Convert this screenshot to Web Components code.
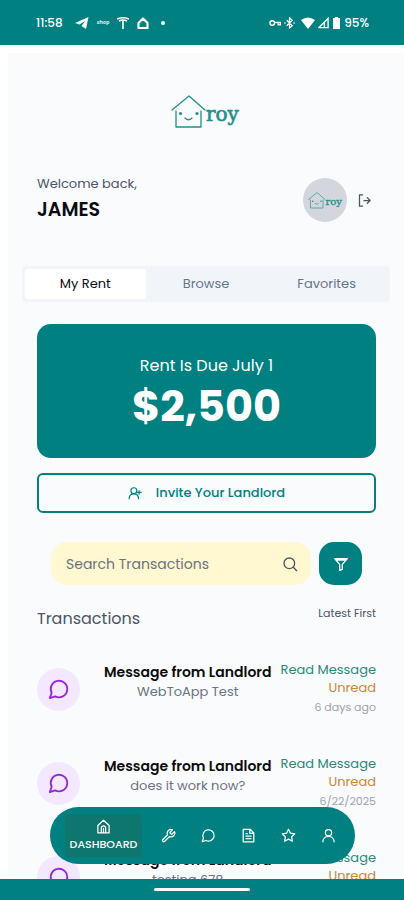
<!DOCTYPE html>
<html lang="en">
<head>
<meta charset="utf-8">
<meta name="viewport" content="width=device-width, initial-scale=1">
<title>Roy</title>
<style>
html, body { margin: 0; height: 100%; }
body { font-family: Poppins, Inter, "Liberation Sans", sans-serif; background: #fff; color: #4b5563; --teal: #008080; --page: #f9fbfd; }
</style>
</head>
<body>
<roy-app></roy-app>
<script>
const define = (name, html, setup) => customElements.define(name, class extends HTMLElement {
  constructor() {
    super();
    this.attachShadow({ mode: 'open' });
  }
  connectedCallback() {
    if (this.shadowRoot.childNodes.length) return;
    const t = document.createElement('template');
    t.innerHTML = '<style>*{box-sizing:border-box}button{font:inherit;color:inherit;background:none;border:0;padding:0;margin:0;cursor:pointer}:host{display:block}</style>' + html;
    this.shadowRoot.append(t.content.cloneNode(true));
    if (setup) setup(this, this.shadowRoot);
  }
});

const icons = {
  logout: '<path d="M9 3H4v18h5M11 12h10M16.500 7.500 21 12l-4.500 4.500"/>',
  invite: '<circle cx="10" cy="8" r="5"/><path d="M2 22c0-5 3-8.500 8-8.500s8 3.500 8 8.500M19 8v6M16.500 11h6"/>',
  search: '<circle cx="11" cy="11" r="8"/><path d="m17 17 5 5"/>',
  filter: '<path d="M2.500 4h19L14 12.500V20l-4 1.500v-9zM5 6h14"/>',
  chat: '<path d="M7.900 20A9 9 0 1 0 4 16.100L2 22Z"/>',
  home: '<path d="M3 10.500 12 2l9 8.500V22H3zM8.500 22v-7.500a3.500 3.500 0 0 1 7 0V22M12 15v7"/>',
  wrench: '<path d="M14.700 6.300a1 1 0 0 0 0 1.600l1.600 1.600a1 1 0 0 0 1.600 0l3.700-3.700a6 6 0 0 1-7.900 7.900L6 21.300a2.100 2.100 0 0 1-3-3l7.500-7.600a6 6 0 0 1 7.900-7.900z"/>',
  file: '<path d="M14.500 2H3.500v20h17V8zM14 2v6.500h6M8 9h2M8 13h8M8 17h8"/>',
  star: '<path d="m12 2 3.100 6.300 6.900 1-5 4.900 1.200 6.900L12 17.800l-6.200 3.300L7 14.200 2 9.300l6.900-1z"/>',
  user: '<circle cx="12" cy="7.500" r="5"/><path d="M3 22c0-5 4-8.500 9-8.500s9 3.500 9 8.500"/>'
};
define('roy-icon', '<style>:host{width:16px;height:16px;flex:none}svg{display:block;width:100%;height:100%;fill:none;stroke:currentColor;stroke-width:2;stroke-linecap:round;stroke-linejoin:round}</style><svg viewBox="0 0 24 24" aria-hidden="true"></svg>',
  (el, root) => { root.querySelector('svg').innerHTML = icons[el.getAttribute('name')]; });

define('roy-logo', `<style>:host{width:70px;color:#248f88}svg{display:block;width:100%}</style>
<svg viewBox="0 0 70 36" role="img" aria-label="roy">
 <g fill="none" stroke="currentColor" stroke-width="1.300" stroke-linecap="round" stroke-linejoin="round">
 <path d="M1 17 18 3 34 17M5 18V34H30V18M14 25q3.500 3.500 7 0"/></g>
 <g fill="currentColor"><circle cx="9.500" cy="20.500" r="1.600"/><circle cx="26" cy="20.500" r="1.600"/></g>
 <text x="35" y="28" fill="currentColor" stroke="currentColor" stroke-width=".6" font-family="'DejaVu Serif', serif" font-size="20">roy</text>
</svg>`);

define('status-bar', `<style>
:host{background:var(--teal);color:#fff;height:45px;flex:none;font-size:12px;line-height:16px;font-weight:500}
div{display:flex;justify-content:space-between;padding:15px 35px 0 36px}
span{display:flex;align-items:center}svg{display:block}
.l{gap:8px}.r{gap:3px}.tiny{font-size:5px;opacity:.8}.dot{width:4px;height:4px;border-radius:50%;background:#fff}
time{margin-right:4px}.dot{margin-left:4px}.gap{margin-left:3px}
</style><div><span class="l"><time>11:58</time>
<svg width="14" height="12" viewBox="0 0 14 12" fill="#fff"><path d="M0 6 13.500 0 11 12 6.500 9 10 4 4.500 7.500z"/></svg>
<b class="tiny">shop</b>
<svg width="12" height="12" viewBox="0 0 12 12" fill="none" stroke="#fff" stroke-width="1.600"><path d="M0 2q6-2.500 12 0M2 4q2-1 4-1t4 1M6 3v9"/></svg>
<svg width="12" height="12" viewBox="0 0 12 12" fill="none" stroke="#fff" stroke-width="2.200" stroke-linejoin="round"><path d="M1.500 11V6L6 1.500 10.500 6v5z"/></svg>
<i class="dot"></i></span>
<span class="r">
<svg width="12" height="8" viewBox="0 0 13 8" fill="none" stroke="#fff" stroke-width="1.500"><circle cx="3.500" cy="4" r="2.500"/><path d="M6 3.500h6.500V6H10V4.500"/></svg>
<svg width="11" height="12" viewBox="0 0 12 12" fill="none" stroke="#fff" stroke-width="1.300"><path d="m3 3 6 6-3 2.500V.5L9 3 3 9M0 6h2M10 6h2"/></svg>
<svg class="gap" width="14" height="12" viewBox="0 0 14 12" fill="#fff"><path d="M0 3q7-5 14 0L7 12z"/></svg>
<svg width="11" height="12" viewBox="0 0 12 12" fill="none" stroke="#fff" stroke-width="1.500"><path d="M11 1v10H1zM7 5v6"/></svg>
<svg width="9" height="12" viewBox="2 0 9 12" fill="#fff"><path d="M5 0h3v1h2v11H3V1h2z"/></svg>
<span>95%</span></span></div>`);

define('welcome-header', `<style>
:host{display:flex;align-items:center;justify-content:space-between;padding:0 32px 0 29px}
p{margin:0;font-size:13px;line-height:20px}h1{margin:0;font-size:19px;line-height:32px;color:#0b0b0f;font-weight:600}
.a{display:flex;align-items:center;gap:10px}.av{width:44px;height:44px;border-radius:50%;background:#d3d6dd;display:grid;place-items:center}
roy-logo{width:35px}button roy-icon{width:15px;height:15px}
</style><div><p>Welcome back,</p><h1><slot></slot></h1></div>
<div class="a"><div class="av"><roy-logo></roy-logo></div><button aria-label="Log out"><roy-icon name="logout"></roy-icon></button></div>`);

define('rent-tabs', `<style>
:host{margin:0 14px;background:#f1f5f9;border-radius:4px;padding:3px}
nav{display:grid;grid-template-columns:repeat(3,1fr)}
button{height:30px;font-size:13px;line-height:20px;border-radius:3px;color:#64748b;font-weight:400}
.on{background:#fff;color:#0b0b0f}
</style><nav role="tablist"><button role="tab" aria-selected="true" class="on">My Rent</button><button role="tab">Browse</button><button role="tab">Favorites</button></nav>`);

define('rent-card', `<style>
:host{background:var(--teal);color:#fff;border-radius:14px;text-align:center;padding:28px 16px 25px}
p{margin:0;font-size:16px;line-height:28px}strong{display:block;font-size:43px;line-height:53px;font-weight:700}
</style><p><slot></slot></p><strong><slot name="amount"></slot></strong>`);

define('invite-button', `<style>
button{width:100%;height:40px;border:2px solid var(--teal);border-radius:6px;color:var(--teal);font-weight:500;font-size:13px;line-height:20px;display:flex;align-items:center;justify-content:center;gap:14px}
roy-icon{width:14px;height:14px}
</style><button><roy-icon name="invite"></roy-icon><slot></slot></button>`);

define('search-bar', `<style>
:host{display:flex;gap:8px;padding:0 14px}
label{flex:1;min-width:0;height:43px;display:flex;align-items:center;background:#fff8d0;border-radius:16px;padding:0 13px 0 15px}
input{flex:1;min-width:0;border:0;outline:0;background:none;padding:0;font:inherit;font-size:14px;line-height:20px}
input::placeholder{color:#6b7280;opacity:1}
button{width:43px;height:43px;border-radius:15px;background:var(--teal);color:#fff;display:grid;place-items:center}
</style><label><input type="search" aria-label="Search transactions" placeholder="Search Transactions"><roy-icon name="search"></roy-icon></label>
<button aria-label="Filter"><roy-icon name="filter"></roy-icon></button>`);

define('message-row', `<style>
:host{display:grid;grid-template-columns:44px 1fr max-content;align-items:center;height:94px;white-space:nowrap}
.c{width:43px;height:43px;border-radius:50%;background:#f3e8ff;color:#9325df;display:grid;place-items:center}
.c roy-icon{width:22px;height:22px}
.m{text-align:center;padding:0 6px 14px 20px;line-height:20px;font-size:13px;color:#6b7280}
h3{margin:0;font-size:14px;line-height:20px;font-weight:600;color:#0b0b0f}
.r{text-align:right;font-size:13px;line-height:18px;display:flex;flex-direction:column}
a{color:#278a78;text-decoration:none}.u{color:#cc8732}time{font-size:11px;line-height:20px;min-height:20px;color:#9ca3af}
</style><div class="c"><roy-icon name="chat"></roy-icon></div>
<div class="m"><h3>Message from Landlord</h3><slot></slot></div>
<div class="r"><a href="#message">Read Message</a><span class="u">Unread</span><time><slot name="date"></slot></time></div>`);

define('bottom-nav', `<style>
nav{display:grid;grid-template-columns:77px 1fr;align-items:center;height:57px;border-radius:29px;background:var(--teal);color:#fff;padding:0 7px 0 15px}
a{display:flex;flex-direction:column;align-items:center;justify-content:center;color:inherit;height:43px;text-decoration:none}
.on{background:#0f766e;font-size:11px;line-height:16px;font-weight:500;gap:2px;border-radius:3px}
roy-icon{width:15px;height:15px}.s{display:grid;grid-template-columns:repeat(5,1fr);padding-left:7px}
</style><nav aria-label="Main"><a href="#dashboard" class="on"><roy-icon name="home"></roy-icon>DASHBOARD</a>
<div class="s"><a href="#repairs" aria-label="Repairs"><roy-icon name="wrench"></roy-icon></a><a href="#messages" aria-label="Messages"><roy-icon name="chat"></roy-icon></a><a href="#documents" aria-label="Documents"><roy-icon name="file"></roy-icon></a><a href="#favorites" aria-label="Favorites"><roy-icon name="star"></roy-icon></a><a href="#profile" aria-label="Profile"><roy-icon name="user"></roy-icon></a></div></nav>`);

define('roy-app', `<style>
:host{display:flex;flex-direction:column;height:100vh}
.view{flex:1;min-height:0;position:relative;overflow:hidden}
main{background:var(--page);margin:8px 0 0 8px;padding-top:40px}
roy-logo{margin:0 auto}
welcome-header{margin-top:45px}rent-tabs{margin-top:40px}
section{padding:22px 28px 0 29px}
invite-button{margin-top:15px}search-bar{margin-top:29px}
.t{display:flex;justify-content:space-between;align-items:flex-start;margin-top:20px}
h2{margin:0;font-size:16px;line-height:28px;font-weight:400}.t span{font-size:11px;line-height:16px}
.list{margin-top:9px}
bottom-nav{position:absolute;left:50px;right:49px;bottom:15px}
footer{height:21px;background:var(--teal);display:flex;justify-content:center;align-items:center;flex:none}
footer i{width:24%;height:3px;border-radius:2px;background:#fff}
</style><status-bar></status-bar>
<div class="view"><main><roy-logo></roy-logo><welcome-header>JAMES</welcome-header><rent-tabs></rent-tabs>
<section><rent-card>Rent Is Due July 1<span slot="amount">$2,500</span></rent-card>
<invite-button>Invite Your Landlord</invite-button><search-bar></search-bar>
<div class="t"><h2>Transactions</h2><span>Latest First</span></div>
<div class="list"><message-row>WebToApp Test<span slot="date">6 days ago</span></message-row>
<message-row>does it work now?<span slot="date">6/22/2025</span></message-row>
<message-row>testing 678</message-row></div></section></main>
<bottom-nav></bottom-nav></div><footer><i></i></footer>`);
</script>
</body>
</html>
